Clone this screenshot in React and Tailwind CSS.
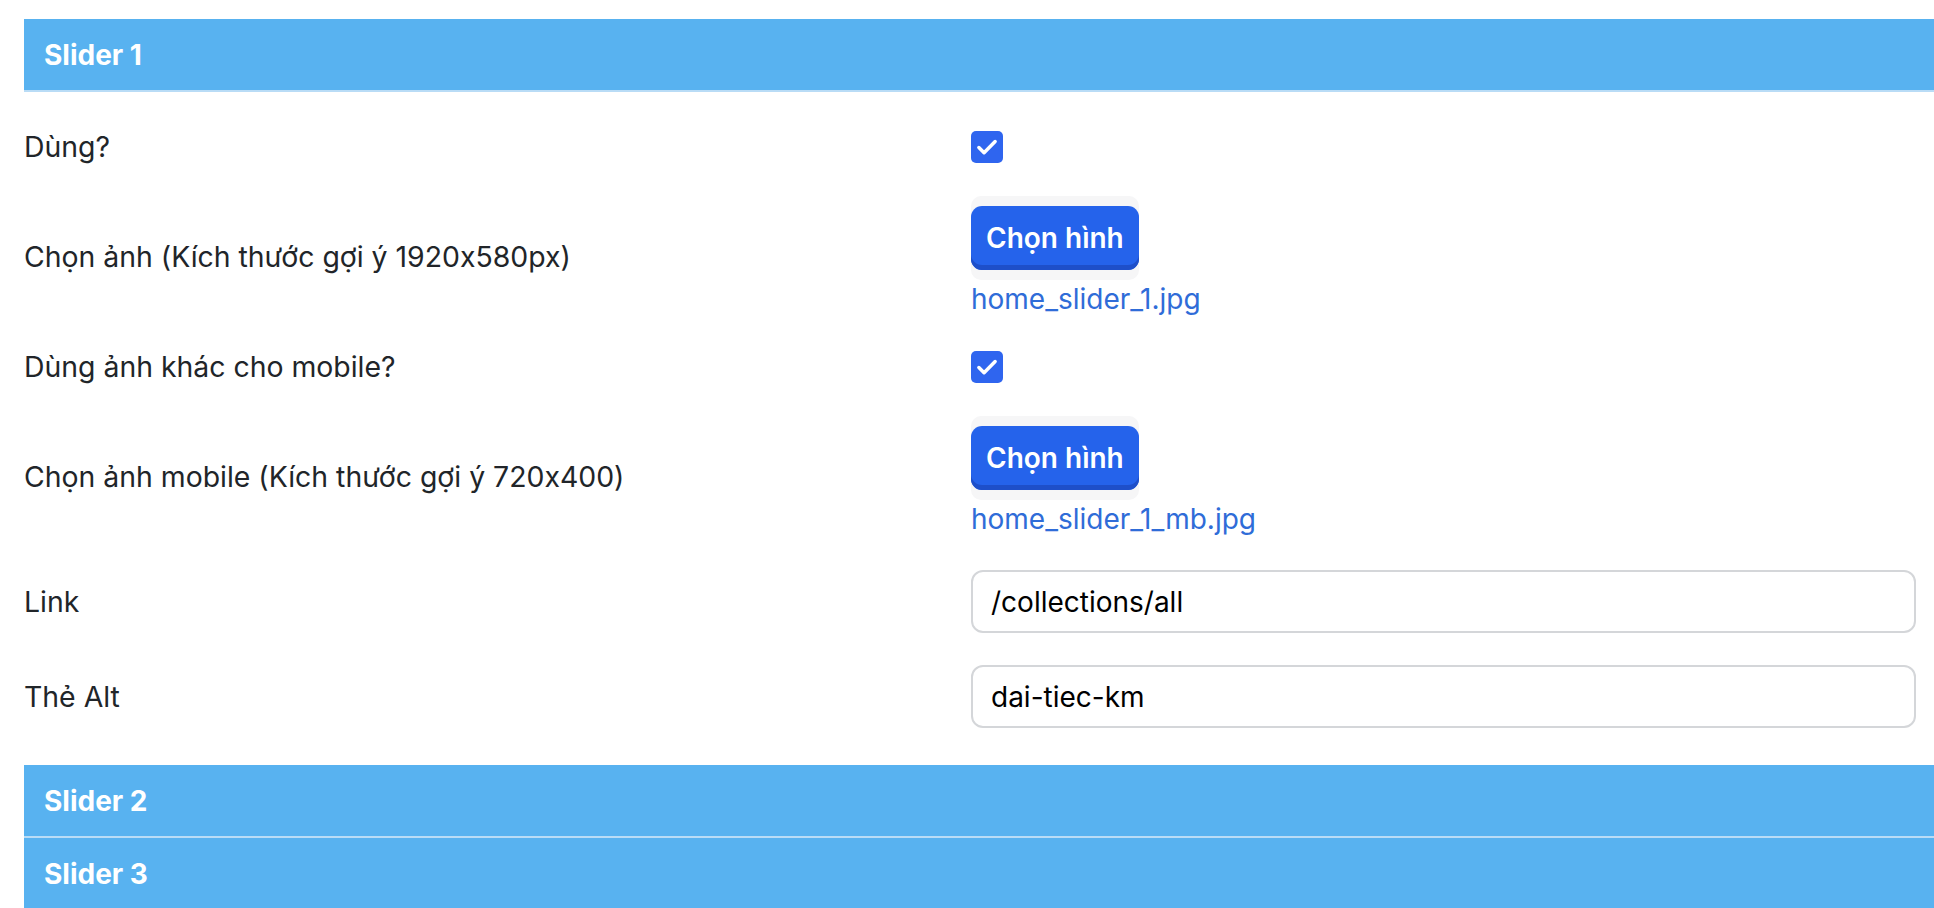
const ChonHinh = ({ file }) => (
  <div className="flex flex-col items-start">
    <div className="rounded-[10px] bg-[#f6f6f7] py-[10px]">
      <button className="h-[64px] rounded-[11px] bg-[#2563eb] px-[15px] text-[28px] font-semibold text-white shadow-[inset_0_-5px_0_#1e4fc9]">
        Chọn hình
      </button>
    </div>
    <a className="text-[28px] leading-[38px] text-[#2f6cd8]">{file}</a>
  </div>
)

const Check = () => (
  <div className="flex h-[34px] items-center">
    <span className="flex h-[32px] w-[32px] items-center justify-center rounded-[5px] bg-[#2f65ef]">
      <svg viewBox="0 0 24 24" className="h-[26px] w-[26px]" fill="none" stroke="white" strokeWidth="3.2" strokeLinecap="round" strokeLinejoin="round">
        <path d="M4.5 12.5l4.8 4.8L19.5 7" />
      </svg>
    </span>
  </div>
)

const Field = ({ value }) => (
  <div className="flex h-[63px] w-full items-center rounded-[12px] border-2 border-[#d4d6d9] bg-white px-[18px] text-[28px] text-black">
    {value}
  </div>
)

const Row = ({ label, children }) => (
  <div className="flex items-center py-4 pr-[18px]">
    <div className="w-[947px] shrink-0 text-[28.4px] leading-[34px] text-[#212529]">{label}</div>
    <div className="flex-1">{children}</div>
  </div>
)

const Header = ({ title }) => (
  <div className="flex h-[73px] items-center border-b-2 border-[#b9dcf6] bg-[#58b2f0] pl-[20px] text-[28px] font-bold text-white">
    {title}
  </div>
)

export default function App() {
  return (
    <div className="h-[908px] overflow-hidden bg-white pl-[24px] pt-[19px] font-['Inter',sans-serif] [font-variant-ligatures:no-contextual]">
      <Header title="Slider 1" />
      <div className="pt-[22px] pb-[21px]">
        <Row label="Dùng?">
          <Check />
        </Row>
        <Row label="Chọn ảnh (Kích thước gợi ý 1920x580px)">
          <ChonHinh file="home_slider_1.jpg" />
        </Row>
        <Row label="Dùng ảnh khác cho mobile?">
          <Check />
        </Row>
        <Row label="Chọn ảnh mobile (Kích thước gợi ý 720x400)">
          <ChonHinh file="home_slider_1_mb.jpg" />
        </Row>
        <Row label="Link">
          <Field value="/collections/all" />
        </Row>
        <Row label="Thẻ Alt">
          <Field value="dai-tiec-km" />
        </Row>
      </div>
      <Header title="Slider 2" />
      <Header title="Slider 3" />
    </div>
  )
}
